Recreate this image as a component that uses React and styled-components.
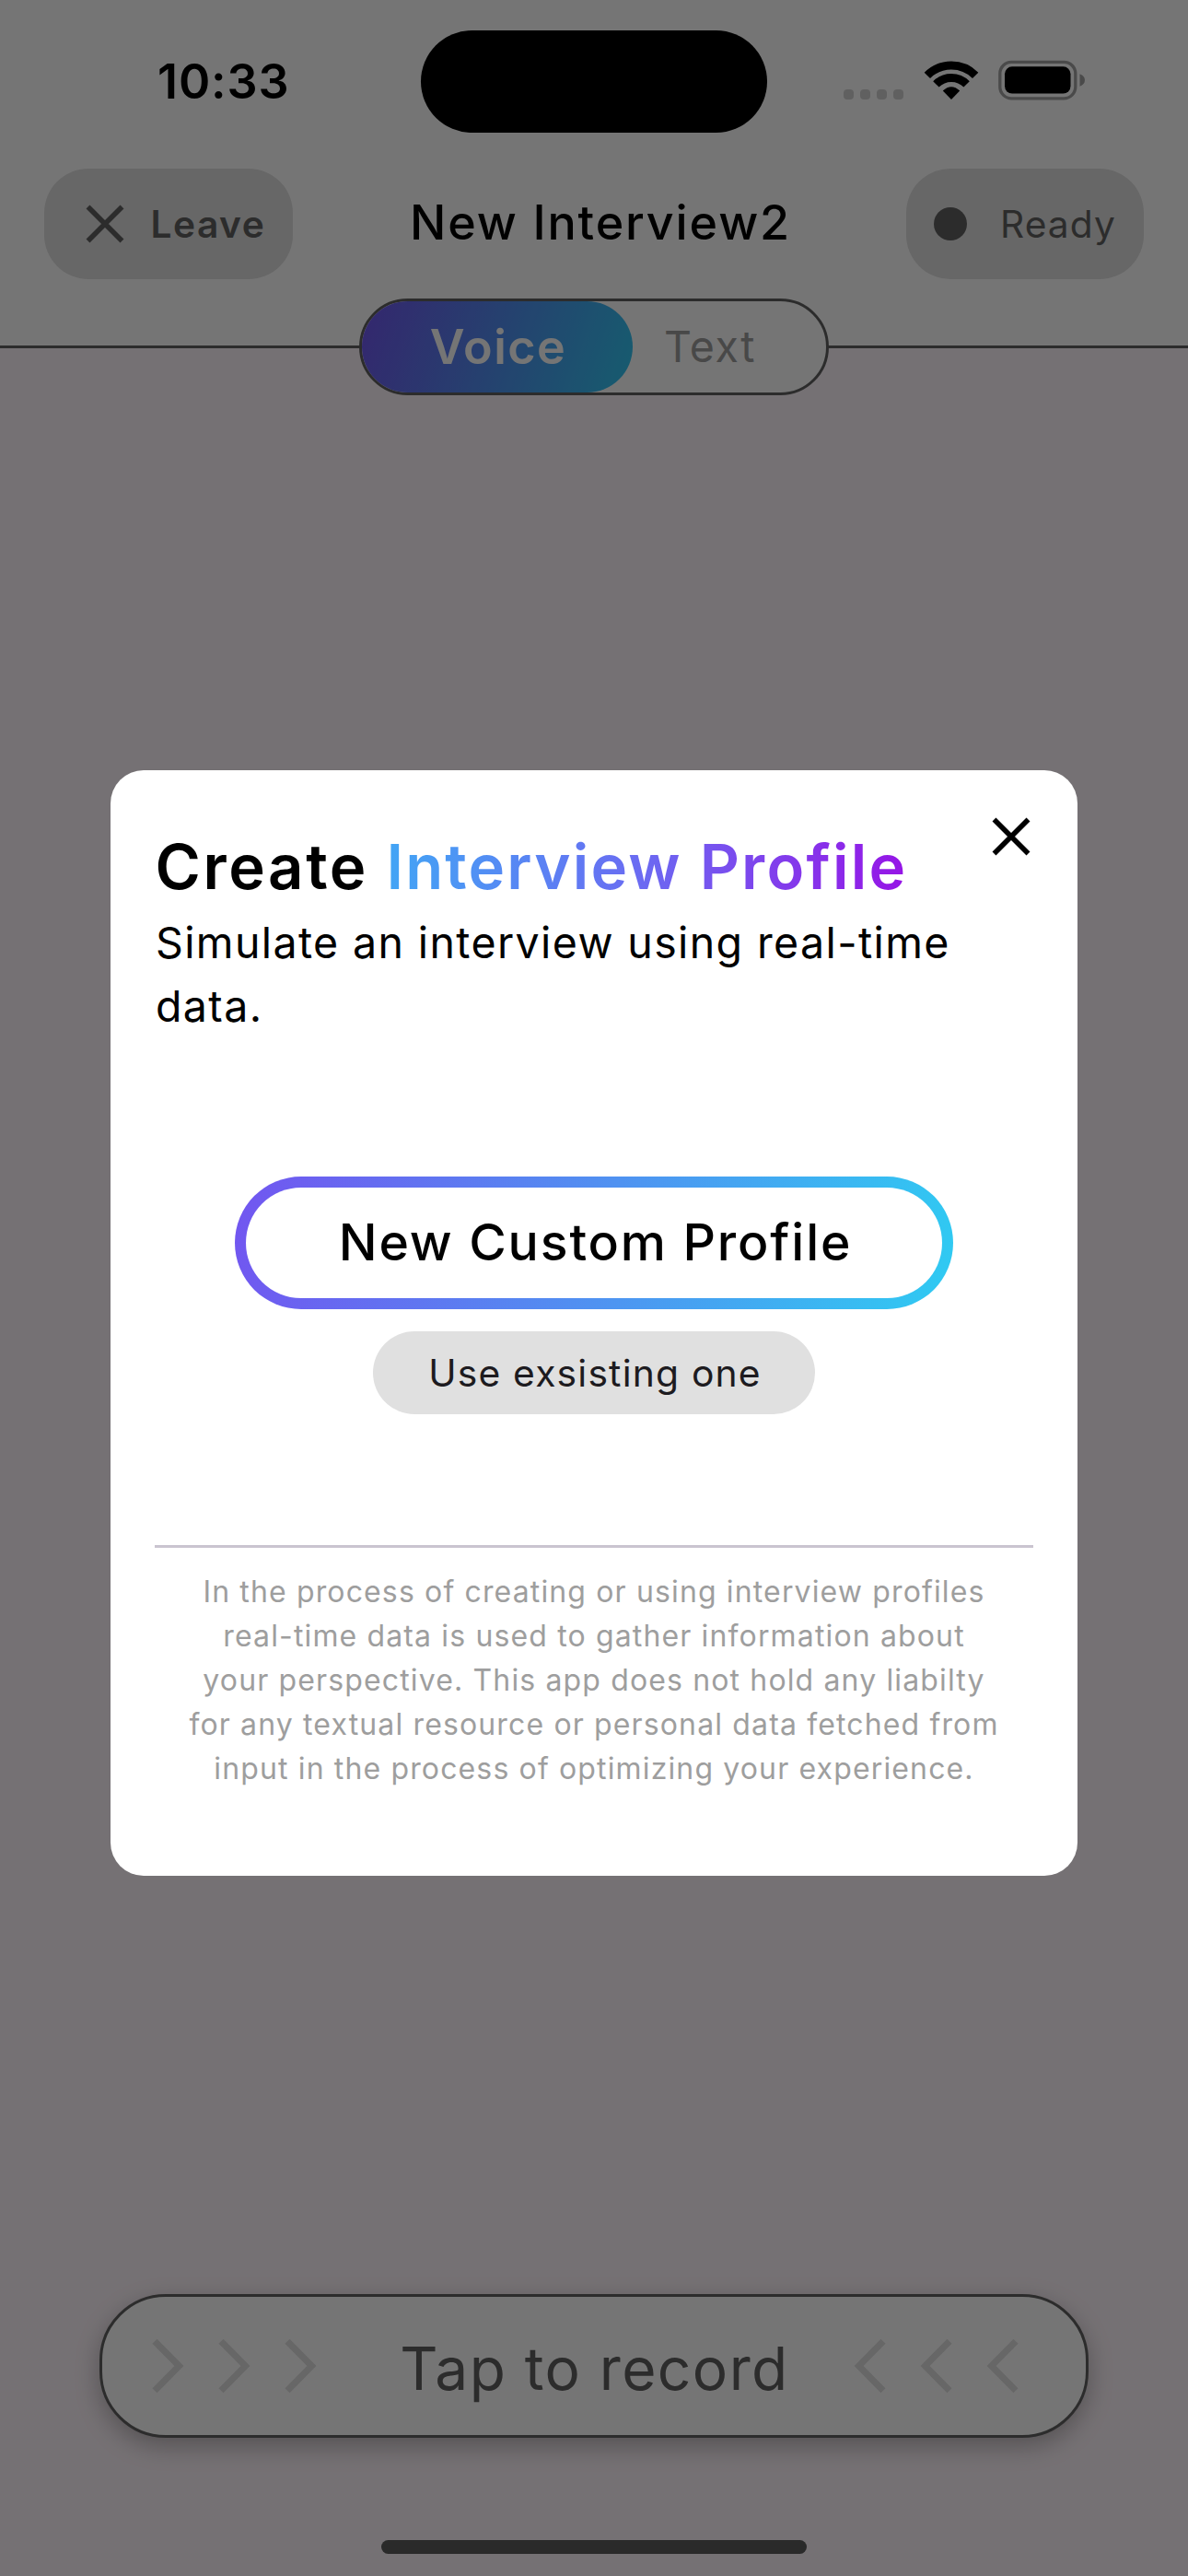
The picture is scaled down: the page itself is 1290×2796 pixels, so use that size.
import React from "react";
import styled, { createGlobalStyle } from "styled-components";

const GlobalStyle = createGlobalStyle`
  * { box-sizing: border-box; }
  body { margin: 0; background: #757174; }
  button { border: 0; padding: 0; margin: 0; background: none; color: inherit; font: inherit; }
  svg { display: block; flex: none; }
`;

const Screen = styled.main`
  position: relative;
  width: 1290px;
  height: 2796px;
  overflow: hidden;
  display: flex;
  flex-direction: column;
  background: #fff6fc;
  color: #000;
  font-family: Inter, "Liberation Sans", sans-serif;
`;

const StatusBar = styled.div`
  height: 177px;
  display: grid;
  grid-template-columns: 457px 376px 1fr;
  align-items: center;
  background: #fff;
`;

const Time = styled.div`
  padding-left: 171px;
  font-size: 52px;
  font-weight: 600;
  line-height: 60px;
  letter-spacing: 0.89px;
`;

const Island = styled.div`
  height: 111px;
  border-radius: 56px;
  background: #000;
`;

const Indicators = styled.div`
  display: flex;
  align-items: center;
  padding: 0 0 4px 83px;
`;

const Signal = styled.div`
  display: flex;
  gap: 7px;
  width: 86.5px;
  padding-top: 31px;
`;

const SignalDot = styled.i`
  width: 11px;
  height: 11px;
  border-radius: 4px;
  background: #d2d2d2;
`;

const WifiSlot = styled.div`
  width: 81px;
`;

const Header = styled.header`
  height: 201px;
  flex: none;
  display: flex;
  align-items: flex-start;
  padding: 6px 48px 0;
  background: #fff;
  border-bottom: 3px solid #616161;
`;

const Chip = styled.button`
  width: ${(p) => p.$width}px;
  height: 120px;
  flex: none;
  display: flex;
  align-items: center;
  gap: ${(p) => p.$gap}px;
  padding-left: ${(p) => p.$inset}px;
  border-radius: 48px;
  background: #e0e0e0;
  color: #616161;
  font-size: 40.7px;
  font-weight: ${(p) => p.$weight};
  letter-spacing: ${(p) => p.$tracking}px;
`;

const ReadyDot = styled.i`
  width: 36px;
  height: 36px;
  flex: none;
  border-radius: 50%;
  background: #616161;
`;

const Title = styled.h1`
  flex: 1;
  margin: 0;
  padding-left: 2px;
  text-align: center;
  font-size: 52px;
  font-weight: 500;
  line-height: 118px;
  letter-spacing: 1.87px;
  white-space: nowrap;
`;

const ModeSwitch = styled.div`
  align-self: center;
  display: flex;
  width: 510px;
  height: 105px;
  flex: none;
  margin-top: -54px;
  z-index: 1;
  border: 3px solid #616161;
  border-radius: 53px;
  background: #fff;
`;

const ActiveMode = styled.button`
  width: 294px;
  padding: 0 0 1px 2px;
  border-radius: 50px;
  background: linear-gradient(108.6deg, #7255f0, #31c9f2);
  color: #fff;
  font-size: 52px;
  font-weight: 600;
  letter-spacing: 1.5px;
`;

const IdleMode = styled.button`
  padding: 0 0 2px 34px;
  color: #9e9e9e;
  font-size: 46.5px;
  letter-spacing: 1.49px;
`;

const Stage = styled.div`
  flex: 1;
`;

const RecordBar = styled.button`
  height: 156px;
  flex: none;
  display: flex;
  align-items: center;
  justify-content: space-between;
  margin: 0 108px;
  padding: 0 73px 0 54px;
  border: 3px solid #616161;
  border-radius: 72px;
  background: #fff;
  color: #616161;
  box-shadow: 0 9px 27px rgba(0, 0, 0, 0.28);
`;

const RecordLabel = styled.span`
  margin-left: 20px;
  padding-top: 6px;
  font-size: 64px;
  line-height: 80px;
  letter-spacing: 1.42px;
`;

const Chevrons = styled.span`
  display: flex;
  gap: 37px;
  transform: ${(p) => (p.$flip ? "scaleX(-1)" : "none")};
`;

const HomeIndicator = styled.div`
  align-self: center;
  width: 462px;
  height: 15px;
  flex: none;
  margin: 111px 0 24px;
  border-radius: 8px;
  background: #5c5c5c;
`;

const Scrim = styled.div`
  position: absolute;
  inset: 0;
  z-index: 2;
  display: flex;
  align-items: center;
  justify-content: center;
  padding: 177px 0 102px;
  background: rgba(0, 0, 0, 0.54);
`;

const Dialog = styled.section`
  width: 1050px;
  height: 1200px;
  display: flex;
  flex-direction: column;
  align-items: center;
  padding: 51px 48px 0;
  border-radius: 36px;
  background: #fff;
`;

const DialogHead = styled.div`
  align-self: stretch;
  height: 96px;
  display: flex;
  align-items: flex-start;
  justify-content: space-between;
  padding-right: 3px;
`;

const Heading = styled.h2`
  margin: 12px 0 0 0.5px;
  font-size: 67px;
  font-weight: 600;
  line-height: 84px;
  letter-spacing: 2.6px;
  white-space: nowrap;
`;

const GradientText = styled.span`
  background: linear-gradient(90deg, #42a5f5, #6a6cf2 48%, #9614e6);
  background-clip: text;
  -webkit-background-clip: text;
  color: transparent;
  letter-spacing: 2.19px;
`;

const Subtitle = styled.p`
  align-self: stretch;
  margin: 6px 0 150px;
  padding-left: 1px;
  font-size: 46.5px;
  line-height: 69px;
  letter-spacing: 1.38px;
`;

const PrimaryButton = styled.button`
  width: 780px;
  height: 144px;
  flex: none;
  padding: 0 0 2px 3px;
  border: 12px solid transparent;
  border-radius: 72px;
  background:
    linear-gradient(#fff, #fff) padding-box,
    linear-gradient(100.5deg, #7255f0, #2fcbf2) border-box;
  font-size: 55.3px;
  font-weight: 500;
  letter-spacing: 1.88px;
`;

const SecondaryButton = styled.button`
  width: 480px;
  height: 90px;
  flex: none;
  margin-top: 24px;
  padding: 0 0 0 2px;
  border-radius: 45px;
  background: #e0e0e0;
  color: #1d1b20;
  font-size: 40.8px;
  letter-spacing: 1.19px;
`;

const Divider = styled.hr`
  width: 954px;
  height: 3px;
  flex: none;
  margin: 142px 0 24px;
  border: 0;
  background: #cac4d0;
`;

const Disclaimer = styled.p`
  margin: 0;
  color: #9e9e9e;
  font-size: 32px;
  line-height: 48px;
  letter-spacing: 1.14px;
  text-align: center;
`;

const Line = styled.span`
  display: block;
`;

const disclaimer = [
  "In the process of creating or using interview profiles",
  "real-time data is used to gather information about",
  "your perspective. This app does not hold any liabilty",
  "for any textual resource or personal data fetched from",
  "input in the process of optimizing your experience.",
];

const CrossIcon = () => (
  <svg width="42" height="42" viewBox="0 0 42 42" fill="none" stroke="currentColor" strokeWidth="5.6">
    <path d="M2.5 2.5 39.5 39.5M39.5 2.5 2.5 39.5" />
  </svg>
);

const ChevronIcon = () => (
  <svg width="35" height="60" viewBox="0 0 35 60" fill="none" stroke="#e0e0e0" strokeWidth="7.2">
    <path d="M3 3.3 29.4 30 3 56.7" />
  </svg>
);

const WifiIcon = () => (
  <svg width="60" height="44" viewBox="0 0 60 44">
    <g fill="none" stroke="#000" strokeWidth="9">
      <path d="M3.84 16.84A37 37 0 0 1 56.16 16.84" />
      <path d="M13.38 26.38A23.5 23.5 0 0 1 46.62 26.38" />
    </g>
    <path d="M30 43 20.8 33.6Q30 25 39.2 33.6Z" />
  </svg>
);

const BatteryIcon = () => (
  <svg width="96" height="44" viewBox="0 0 96 44">
    <rect x="1.8" y="2.3" width="82" height="39.5" rx="12.5" fill="none" stroke="#a2a2a2" strokeWidth="3.3" />
    <rect x="7" y="7.3" width="71.5" height="29.2" rx="8" />
    <path d="M88.5 15.3C92 16.6 94 19 94 22S92 27.4 88.5 28.8Z" fill="#a2a2a2" />
  </svg>
);

export default function App() {
  return (
    <Screen>
      <GlobalStyle />
      <StatusBar>
        <Time>10:33</Time>
        <Island />
        <Indicators>
          <Signal>
            <SignalDot />
            <SignalDot />
            <SignalDot />
            <SignalDot />
          </Signal>
          <WifiSlot>
            <WifiIcon />
          </WifiSlot>
          <BatteryIcon />
        </Indicators>
      </StatusBar>
      <Header>
        <Chip $width={270} $gap={28.5} $inset={45} $weight={600} $tracking={1.48}>
          <CrossIcon />
          Leave
        </Chip>
        <Title>New Interview2</Title>
        <Chip $width={258} $gap={36} $inset={30} $weight={400} $tracking={1.06}>
          <ReadyDot />
          Ready
        </Chip>
      </Header>
      <ModeSwitch>
        <ActiveMode>Voice</ActiveMode>
        <IdleMode>Text</IdleMode>
      </ModeSwitch>
      <Stage />
      <RecordBar>
        <Chevrons>
          <ChevronIcon />
          <ChevronIcon />
          <ChevronIcon />
        </Chevrons>
        <RecordLabel>Tap to record</RecordLabel>
        <Chevrons $flip>
          <ChevronIcon />
          <ChevronIcon />
          <ChevronIcon />
        </Chevrons>
      </RecordBar>
      <HomeIndicator />
      <Scrim>
        <Dialog>
          <DialogHead>
            <Heading>
              Create <GradientText>Interview Profile</GradientText>
            </Heading>
            <button aria-label="Close">
              <CrossIcon />
            </button>
          </DialogHead>
          <Subtitle>Simulate an interview using real-time data.</Subtitle>
          <PrimaryButton>New Custom Profile</PrimaryButton>
          <SecondaryButton>Use exsisting one</SecondaryButton>
          <Divider />
          <Disclaimer>
            {disclaimer.map((line) => (
              <Line key={line}>{line}</Line>
            ))}
          </Disclaimer>
        </Dialog>
      </Scrim>
    </Screen>
  );
}
